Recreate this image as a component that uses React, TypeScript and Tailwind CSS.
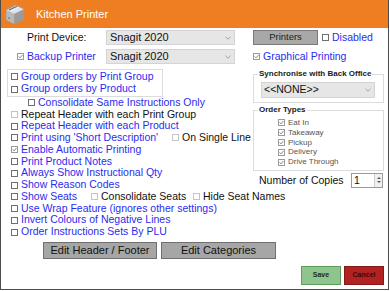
import type { ReactNode } from 'react';

const BLUE = 'text-[#2b2bf0]';

function Check({ on = false, dim = false }: { on?: boolean; dim?: boolean }) {
  return (
    <span
      className={`inline-flex h-[7px] w-[7px] shrink-0 items-center justify-center border bg-white ${
        dim ? 'border-[#c4c4c4]' : on ? 'border-[#9a9a9a]' : 'border-[#6f6f6f]'
      }`}
    >
      {on && (
        <svg viewBox="0 0 5 5" className="h-[5px] w-[5px]">
          <path d="M0.6 2.4 L2 3.9 L4.5 1" fill="none" stroke="#7a7a7a" strokeWidth="0.9" />
        </svg>
      )}
    </span>
  );
}

function Chevron() {
  return (
    <svg viewBox="0 0 6 4" className="h-[4px] w-[6px]">
      <path d="M0.5 0.8 L3 3.2 L5.5 0.8" fill="none" stroke="#9a9a9a" strokeWidth="0.9" />
    </svg>
  );
}

function Opt({
  label,
  on,
  dim,
  black,
  className = 'pl-[10px]',
  children,
}: {
  label: string;
  on?: boolean;
  dim?: boolean;
  black?: boolean;
  className?: string;
  children?: ReactNode;
}) {
  return (
    <div className={`flex h-[11.78px] items-center ${className}`}>
      <Check on={on} dim={dim} />
      <span className={`ml-[3px] shrink-0 ${black ? 'text-[#111]' : BLUE}`}>{label}</span>
      {children}
    </div>
  );
}

function PrinterIcon() {
  return (
    <svg viewBox="0 0 22 22" className="h-[22px] w-[21px]">
      <path d="M2 7.5 Q2 6 3.5 5.3 L11 1.6 Q12.3 1 13.6 1.6 L19.8 4.6 Q21 5.3 21 6.6 L21 15.5 Q21 16.8 19.8 17.5 L12 21.2 Q10.7 21.8 9.4 21.2 L3.3 18.2 Q2 17.5 2 16.1 Z" fill="#9b9b9b" />
      <path d="M2.4 7 L10.6 11 L20.6 6 L12.4 2 Z" fill="#e2e2e2" />
      <path d="M2.4 7 L10.6 11 L10.6 21.3 L3.3 17.8 Q2.4 17.3 2.4 16.2 Z" fill="#b9b9b9" />
      <path d="M5.2 6.9 L13.6 2.8" stroke="#6d6d6d" strokeWidth="1.2" />
      <path d="M7 8.2 L15.3 4.1" stroke="#f5f5f5" strokeWidth="0.8" />
      <circle cx="5.3" cy="15.3" r="0.9" fill="#777" />
    </svg>
  );
}

export default function App() {
  return (
    <div className="flex h-[290px] w-[389px] flex-col overflow-hidden border-x border-b border-[#4d4d4d] bg-white font-['Liberation_Sans',Arial,sans-serif] text-[10.5px] text-[#111]">
      <div className="flex h-[28px] shrink-0 items-center bg-[#ef7e22]">
        <div className="ml-[3px] flex">
          <PrinterIcon />
        </div>
        <span className="ml-[11px] text-[11px] text-white">Kitchen Printer</span>
      </div>

      <div className="mt-[2px] flex h-[15px] items-center">
        <div className="w-[105px] shrink-0 pl-[26px]">Print Device:</div>
        <div className="flex h-[15px] w-[129px] shrink-0 items-center justify-between border border-[#d4d4d4] bg-[#e6e6e6] pr-[3px] pl-[3px] text-[11px]">
          <span>Snagit 2020</span>
          <Chevron />
        </div>
        <div className="ml-[18px] flex h-[15px] w-[65px] shrink-0 items-center justify-center border border-[#7a7a7a] bg-[#a8a8a8] text-[9.5px] text-[#222]">
          Printers
        </div>
        <span className="ml-[4px] flex">
          <Check />
        </span>
        <span className={`ml-[3px] shrink-0 ${BLUE}`}>Disabled</span>
      </div>

      <div className="mt-[4px] flex h-[15px] items-center">
        <div className="flex w-[105px] shrink-0 items-center pl-[16px]">
          <Check on />
          <span className={`ml-[3px] ${BLUE}`}>Backup Printer</span>
        </div>
        <div className="flex h-[15px] w-[129px] shrink-0 items-center justify-between border border-[#d4d4d4] bg-[#e6e6e6] pr-[3px] pl-[3px] text-[11px]">
          <span>Snagit 2020</span>
          <Chevron />
        </div>
        <span className="ml-[18px] flex">
          <Check on />
        </span>
        <span className={`ml-[3px] shrink-0 ${BLUE}`}>Graphical Printing</span>
      </div>

      <div className="mt-[5px] flex items-start">
        <div className="w-[252px] shrink-0 whitespace-nowrap">
          <div className="ml-[6px] w-[156px] border border-[#dcdcdc]">
            <div className="flex h-[12.9px] items-center pl-[3px]">
              <Check />
              <span className={`ml-[3px] ${BLUE}`}>Group orders by Print Group</span>
            </div>
            <div className="flex h-[12.9px] items-center pl-[3px]">
              <Check />
              <span className={`ml-[3px] ${BLUE}`}>Group orders by Product</span>
            </div>
          </div>
          <Opt label="Consolidate Same Instructions Only" className="pl-[27px]" />
          <Opt label="Repeat Header with each Print Group" dim black />
          <Opt label="Repeat Header with each Product" />
          <div className="flex h-[11.78px] items-center pl-[10px]">
            <Check />
            <span className={`ml-[3px] w-[151px] shrink-0 ${BLUE}`}>Print using 'Short Description'</span>
            <Check dim />
            <span className="ml-[3px] shrink-0">On Single Line</span>
          </div>
          <Opt label="Enable Automatic Printing" on />
          <Opt label="Print Product Notes" />
          <Opt label="Always Show Instructional Qty" />
          <Opt label="Show Reason Codes" />
          <div className="flex h-[11.78px] items-center pl-[10px]">
            <Check />
            <span className={`ml-[3px] w-[70px] shrink-0 ${BLUE}`}>Show Seats</span>
            <Check dim />
            <span className="ml-[3px] w-[92px] shrink-0">Consolidate Seats</span>
            <Check dim />
            <span className="ml-[3px] shrink-0">Hide Seat Names</span>
          </div>
          <Opt label="Use Wrap Feature (ignores other settings)" />
          <Opt label="Invert Colours of Negative Lines" />
          <Opt label="Order Instructions Sets By PLU" />
        </div>

        <div className="flex w-[131px] shrink-0 flex-col">
          <fieldset className="border border-[#dcdcdc]">
            <legend className="ml-[4px] px-[1px] text-[8px] leading-[10px] font-bold text-[#1a1a1a]">
              Synchronise with Back Office
            </legend>
            <div className="mt-[3px] mb-[4px] ml-[7px] flex h-[15.5px] w-[114px] items-center justify-between border border-[#d4d4d4] bg-[#e6e6e6] pr-[3px] pl-[2px]">
              <span>&lt;&lt;NONE&gt;&gt;</span>
              <Chevron />
            </div>
          </fieldset>

          <fieldset className="mt-[2.5px] border border-[#dcdcdc]">
            <legend className="ml-[4px] px-[1px] text-[8px] leading-[10px] font-bold text-[#1a1a1a]">
              Order Types
            </legend>
            <div className="pt-[3px] pb-[3px] pl-[24px] text-[8px] text-[#555]">
              {['Eat In', 'Takeaway', 'Pickup', 'Delivery', 'Drive Through'].map((t) => (
                <div key={t} className="flex h-[9.8px] items-center">
                  <Check on />
                  <span className="ml-[3px]">{t}</span>
                </div>
              ))}
            </div>
          </fieldset>

          <div className="mt-[2px] flex h-[15px] items-center justify-between pr-[1px] pl-[6px]">
            <span>Number of Copies</span>
            <div className="flex h-[15px] w-[32px] items-stretch border border-[#9a9a9a] bg-white">
              <span className="flex flex-1 items-center pl-[2px]">1</span>
              <div className="flex w-[8px] flex-col items-center justify-center gap-[2px] border-l border-[#d0d0d0] bg-[#f0f0f0]">
                <svg viewBox="0 0 4 2" className="h-[2px] w-[4px]">
                  <path d="M0 2 L2 0 L4 2 Z" fill="#555" />
                </svg>
                <svg viewBox="0 0 4 2" className="h-[2px] w-[4px]">
                  <path d="M0 0 L2 2 L4 0 Z" fill="#555" />
                </svg>
              </div>
            </div>
          </div>
        </div>
      </div>

      <div className="mt-[4px] flex pl-[42px]">
        <div className="flex h-[17px] w-[114px] items-center justify-center border border-[#707070] bg-[#a6a6a6] text-[11px]">
          Edit Header / Footer
        </div>
        <div className="ml-[4px] flex h-[17px] w-[115px] items-center justify-center border border-[#707070] bg-[#a6a6a6] text-[11px]">
          Edit Categories
        </div>
      </div>

      <div className="mt-[7px] flex justify-end gap-[3px] pr-[4px]">
        <div className="flex h-[19px] w-[40px] items-center justify-center border border-[#5f9e5f] bg-[#8dc58d] text-[7px] font-bold text-[#1b2e1b]">
          Save
        </div>
        <div className="flex h-[19px] w-[40px] items-center justify-center border border-[#861818] bg-[#b32222] text-[7px] font-bold text-[#3a0808]">
          Cancel
        </div>
      </div>
    </div>
  );
}
